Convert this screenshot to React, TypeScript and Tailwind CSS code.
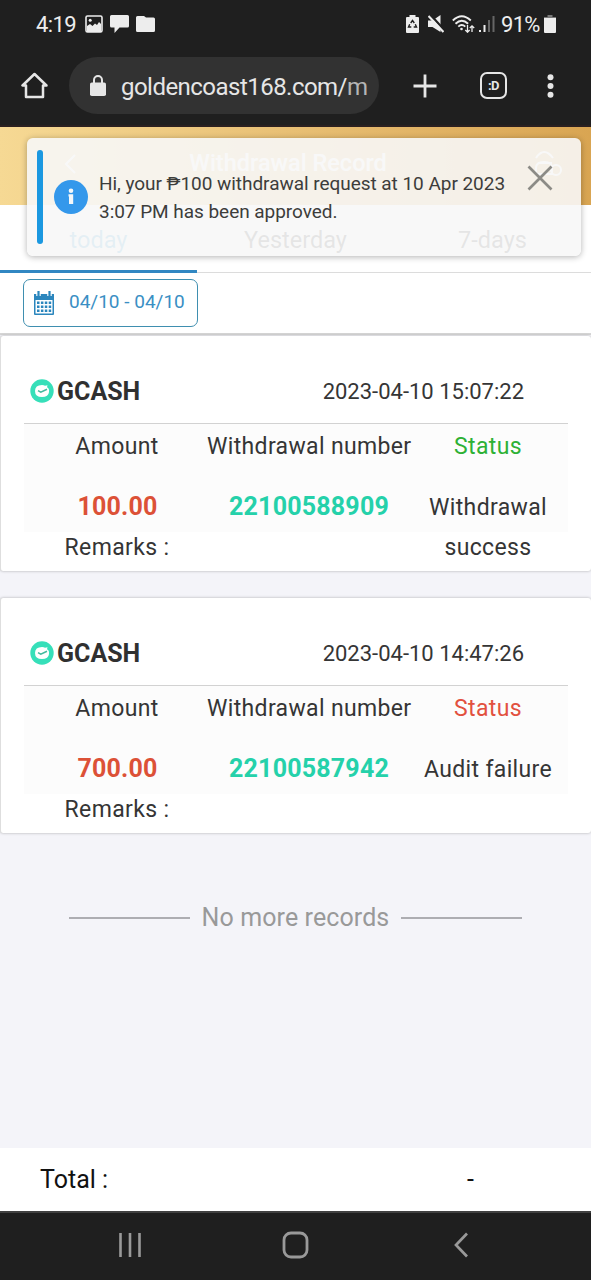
import React from 'react';

interface WithdrawalRecord {
  date: string;
  amount: string;
  number: string;
  status: string;
  success: boolean;
}

const records: WithdrawalRecord[] = [
  {
    date: '2023-04-10 15:07:22',
    amount: '100.00',
    number: '22100588909',
    status: 'Withdrawal success',
    success: true,
  },
  {
    date: '2023-04-10 14:47:26',
    amount: '700.00',
    number: '22100587942',
    status: 'Audit failure',
    success: false,
  },
];

const StatusBar = () => (
  <div className="flex h-12 items-center pl-9 text-[#ededed]">
    <span className="w-[49px] pt-px text-[22px] leading-none tracking-[-0.6px]">4:19</span>
    <svg className="h-[18px] w-[18px]" viewBox="0 0 18 18" fill="none">
      <rect x="1" y="1" width="16" height="16" rx="1.5" stroke="#ededed" strokeWidth="1.6" />
      <path d="M2 11l3-2 2.500 2L10 8.500l2 1.500 2-3 2 2v8H2z" fill="#ededed" />
      <circle cx="5.2" cy="5.2" r="1.5" fill="#ededed" />
    </svg>
    <svg className="ml-[7px] h-[18px] w-[19px]" viewBox="0 0 19 18" fill="#ededed">
      <path d="M1.5 0h16q1.5 0 1.5 1.500v9.500q0 1.500-1.500 1.500H9.500L4.500 18v-5.500h-3Q0 12.500 0 11V1.500Q0 0 1.500 0z" />
    </svg>
    <svg className="ml-[7px] h-4 w-[19px]" viewBox="0 0 19 16" fill="#ededed">
      <path d="M1.500 0H8l2 1.500h7.500Q19 1.500 19 3v11.500q0 1.500-1.500 1.500h-16Q0 16 0 14.500v-13Q0 0 1.500 0z" />
    </svg>

    <svg className="ml-[251px] h-[18px] w-[13px]" viewBox="0 0 13 18">
      <path d="M3.500 0h6v2H12q1 0 1 1v14q0 1-1 1H1q-1 0-1-1V3q0-1 1-1h2.500z" fill="#ededed" />
      <path
        d="M4.700 8l1.800-2.500L8.300 8M9.300 9.200l1.200 2.800H7.700M5.300 12H2.500l1.200-2.800"
        stroke="#1f1f1f"
        strokeWidth="1.400"
        fill="none"
      />
    </svg>
    <svg className="ml-[9px] h-[18px] w-4" viewBox="0 0 16 18">
      <path d="M0 5.500h4.500L12.500 0v17L4.500 12H0z" fill="#ededed" />
      <path d="M2.500 0L17 16" stroke="#1f1f1f" strokeWidth="2.500" />
      <path d="M.5 1L15.500 17" stroke="#ededed" strokeWidth="2.200" />
    </svg>
    <svg className="ml-2 h-[18px] w-[23px]" viewBox="0 0 23 18" fill="none" stroke="#ededed">
      <path d="M.8 5.500q9-8.500 18 0M3.500 8.700q6.300-6 12.600 0M6.300 11.600q3.500-3.200 7 0" strokeWidth="1.900" />
      <circle cx="9.500" cy="14" r="1.300" fill="#ededed" stroke="none" />
      <path d="M15.500 10v7M13.300 15l2.200 2.200 2.200-2.200M20 17v-6M17.800 13L20 10.800 22.200 13" strokeWidth="1.300" />
    </svg>
    <svg className="ml-1 h-4 w-4" viewBox="0 0 16 16">
      <path d="M0 14h2v2H0zM4.500 9h2v7h-2z" fill="#ededed" />
      <path d="M9 4h2v12H9zM13.500 0h2v16h-2z" fill="#666" />
    </svg>
    <span className="ml-[6px] w-[40px] pt-px text-[22px] leading-none tracking-[-0.7px]">91%</span>
    <svg className="ml-[3px] h-[18px] w-3" viewBox="0 0 12 18">
      <path d="M3.500 0h5v2H12v2H0V2h3.500z" fill="#777" />
      <path d="M0 3h12v14q0 1-1 1H1q-1 0-1-1z" fill="#ededed" />
    </svg>
  </div>
);

const AddressBar = () => (
  <div className="flex h-[79px] items-start border-b-2 border-[#2a2020] pl-[21px] pt-[9px] text-[#e6e6e6]">
    <svg className="mt-[15px] h-[27px] w-[27px]" viewBox="0 0 27 27" fill="none" stroke="#e6e6e6" strokeWidth="2.500">
      <path d="M1.500 13.500h3.500V25h17V13.500h3.500L13.500 2z" strokeLinejoin="round" />
    </svg>
    <div className="ml-[21px] flex h-[57px] w-[310px] items-center rounded-full bg-[#323232] pl-[21px]">
      <svg className="h-[21px] w-4" viewBox="0 0 16 21">
        <path d="M4 9V5a4 4 0 018 0v4" fill="none" stroke="#e6e6e6" strokeWidth="2" />
        <rect y="7.500" width="16" height="13.500" rx="1.800" fill="#e6e6e6" />
      </svg>
      <span className="ml-[15px] whitespace-nowrap pt-[2px] text-[24px] leading-none tracking-[-0.53px]">
        goldencoast168.com/<span className="text-[#b5b5b5]">m</span>
      </span>
    </div>
    <svg className="ml-[34px] mt-[17px] h-6 w-6" viewBox="0 0 24 24" stroke="#e6e6e6" strokeWidth="2.800">
      <path d="M12 .5v23M.5 12h23" />
    </svg>
    <div className="ml-[43px] mt-[15px] flex h-[27px] w-[27px] items-center justify-center rounded-[7px] border-[2.5px] border-[#e6e6e6] text-[13px] font-bold leading-none tracking-[-0.5px]">
      :D
    </div>
    <svg className="ml-[40px] mt-[17px] h-6 w-[7px]" viewBox="0 0 7 24" fill="#e6e6e6">
      <circle cx="3.500" cy="3.200" r="3" />
      <circle cx="3.500" cy="12" r="3" />
      <circle cx="3.500" cy="20.800" r="3" />
    </svg>
  </div>
);

const Toast = () => (
  <div className="absolute left-[27px] top-[138px] flex h-[118px] w-[554px] rounded-md bg-[#f7f7f7]/90 shadow-[0_1px_6px_rgba(0,0,0,0.3)]">
    <div className="ml-[10px] mt-[12px] h-[94px] w-[6px] rounded-full bg-[#1b98e0]" />
    <svg className="ml-[11px] mt-[42px] h-[34px] w-[34px]" viewBox="0 0 34 34">
      <circle cx="17" cy="17" r="17" fill="#3498eb" />
      <circle cx="17" cy="10.800" r="2.300" fill="#f5f8fa" />
      <path d="M14.500 14.300h4.700v9.700h-4.200v-7.500h-.5z" fill="#f5f8fa" />
    </svg>
    <p className="ml-[11px] mt-[32px] whitespace-nowrap text-[19px] leading-[28px] tracking-[-0.04px] text-[#3d3d3b]">
      Hi, your ₱100 withdrawal request at 10 Apr 2023
      <br />
      3:07 PM has been approved.
    </p>
    <svg className="absolute left-[500px] top-[27px] h-[26px] w-[26px]" viewBox="0 0 26 26" stroke="#8c8b86" strokeWidth="2.700">
      <path d="M1.500 1.500l23 23M24.500 1.500l-23 23" />
    </svg>
  </div>
);

const PageHeader = () => (
  <>
    <header className="flex h-[78px] items-center justify-between bg-gradient-to-r from-[#f6d994] to-[#d9a552] pb-1 pl-[60px] pr-[27px] text-white">
      <svg className="h-6 w-5" viewBox="0 0 20 24" fill="none" stroke="white" strokeWidth="2">
        <path d="M15 3L6 12l9 9" />
      </svg>
      <h1 className="mr-8 text-[23.5px] font-medium leading-none">Withdrawal Record</h1>
      <svg className="h-9 w-9" viewBox="0 0 36 36" fill="none" stroke="white" strokeWidth="2">
        <path d="M8 12q8-12 17 0M10 17h14M8 22q0-6 8-6t8 6v6H8z" />
        <circle cx="28" cy="24" r="5" />
      </svg>
    </header>
    <nav className="grid h-[68px] grid-cols-3 border-b border-[#dcdcdc] bg-white text-center text-[23.5px] leading-[70px] text-[#3d3d3d]">
      <span className="h-[68px] border-b-[3px] border-[#3187c2] text-[#3b9fd8]">today</span>
      <span>Yesterday</span>
      <span>7-days</span>
    </nav>
  </>
);

const DateFilter = () => (
  <div className="flex h-[62px] border-b-2 border-[#d6d6d6] bg-white pl-[23px] pt-[6px]">
    <button className="flex h-12 w-[175px] items-center rounded-[7px] border-[1.5px] border-[#3f8fb0] pl-[9px] text-[#3a8fc4]">
      <svg className="h-6 w-[22px]" viewBox="0 0 22 24">
        <path d="M1 3h20v20q0 1-1 1H2q-1 0-1-1z" fill="#2b86bd" />
        <path d="M5.500 0v5M16.500 0v5" stroke="white" strokeWidth="4.500" />
        <path d="M5.500 0v5M16.500 0v5" stroke="#2b86bd" strokeWidth="2.200" />
        <path d="M2.500 9h17v13.500h-17z" fill="white" />
        <path d="M4 11.700h14.500M4 15.700h14.500M4 19.700h14.500" stroke="#2b86bd" strokeWidth="2.500" strokeDasharray="2.500 1.400" />
      </svg>
      <span className="ml-[14px] whitespace-nowrap pb-[3px] text-[19px] leading-none">04/10 - 04/10</span>
    </button>
  </div>
);

const RecordCard = ({ date, amount, number, status, success }: WithdrawalRecord) => (
  <section className="h-[235px] rounded-[3px] border-l border-[#dedede] bg-white pl-[23px] pr-[23px] shadow-[0_0_3px_rgba(0,0,0,0.3)]">
    <div className="flex h-[88px] items-center justify-between border-b border-[#d2d2d2] pl-[6px] pr-11 pt-[23px]">
      <div className="flex items-center">
        <svg className="h-6 w-6" viewBox="0 0 24 24">
          <circle cx="12" cy="12" r="11.700" fill="#36dfb9" />
          <path d="M5 12q0-6 7-6 2 0 3 .7l2.500-.5-.5 2q2.500 1.300 2 4.800-.5 5-7 5-7 0-7-6z" fill="white" />
          <path d="M8 11.700l2.800 1.500 6.200-3" fill="none" stroke="#42b99d" strokeWidth="1.500" />
        </svg>
        <span className="ml-[3px] text-[25px] font-bold leading-none text-[#303030]">GCASH</span>
      </div>
      <span className="pt-[2px] text-[22px] leading-none">{date}</span>
    </div>
    <div className="grid h-[108px] grid-cols-[183px_204px_157px] grid-rows-[62px_46px] bg-[#fcfcfc] text-center text-[23px] leading-[40px] tracking-[0.35px]">
      <span className="pl-[3px] pt-[3px]">Amount</span>
      <span className="whitespace-nowrap pt-[3px]">Withdrawal number</span>
      {success ? (
        <span className="pr-[3px] pt-[3px] text-[#2eb135]">Status</span>
      ) : (
        <span className="pr-[3px] pt-[3px] text-[#e2513f]">Status</span>
      )}
      <strong className="pl-[4px] pt-px text-[25px] font-bold tracking-[0.2px] text-[#dc5137]">{amount}</strong>
      <strong className="pt-px text-[25px] font-bold tracking-[0.2px] text-[#25d1aa]">{number}</strong>
      <span className="pl-[10px] pr-[13px] pt-[2px]">{status}</span>
    </div>
    <div className="w-[186px] pt-px text-center text-[23px] leading-[30px] tracking-[0.35px]">Remarks :</div>
  </section>
);

const App = () => {
  return (
    <div className="relative flex h-[1280px] w-[591px] flex-col overflow-hidden bg-[#f4f4f9] font-['Roboto',sans-serif] text-[#353535]">
      <div className="shrink-0 bg-[#1f1f1f]">
        <StatusBar />
        <AddressBar />
      </div>
      <PageHeader />
      <DateFilter />
      <main className="flex flex-1 flex-col gap-[27px] pt-px">
        {records.map((record) => (
          <RecordCard key={record.number} {...record} />
        ))}
        <div className="mt-[43px] flex items-center justify-center gap-3 text-[25px] leading-[30px] tracking-[0.1px] text-[#999]">
          <span className="h-[1.5px] w-[121px] bg-[#adadb2]" />
          No more records
          <span className="h-[1.5px] w-[121px] bg-[#adadb2]" />
        </div>
      </main>
      <footer className="flex h-[63px] items-center justify-between bg-white pl-10 pr-[117px] text-[25px] text-[#111]">
        <span>Total :</span>
        <span>-</span>
      </footer>
      <div className="flex h-[69px] shrink-0 items-center border-t-2 border-[#414141] bg-[#1f1f1f] pb-[3px] pl-[118px]">
        <svg className="h-[26px] w-6" viewBox="0 0 24 26" stroke="#999" strokeWidth="2.600">
          <path d="M2.500 1v24M12 1v24M21.500 1v24" />
        </svg>
        <svg className="ml-[140px] h-7 w-[27px]" viewBox="0 0 27 28" fill="none" stroke="#999" strokeWidth="2.800">
          <rect x="2" y="2" width="23" height="24" rx="7" />
        </svg>
        <svg className="ml-[144px] h-[26px] w-4" viewBox="0 0 16 26" fill="none" stroke="#999" strokeWidth="2.700">
          <path d="M14 1.500L3 13l11 11.500" />
        </svg>
      </div>
      <Toast />
    </div>
  );
};

export default App;
